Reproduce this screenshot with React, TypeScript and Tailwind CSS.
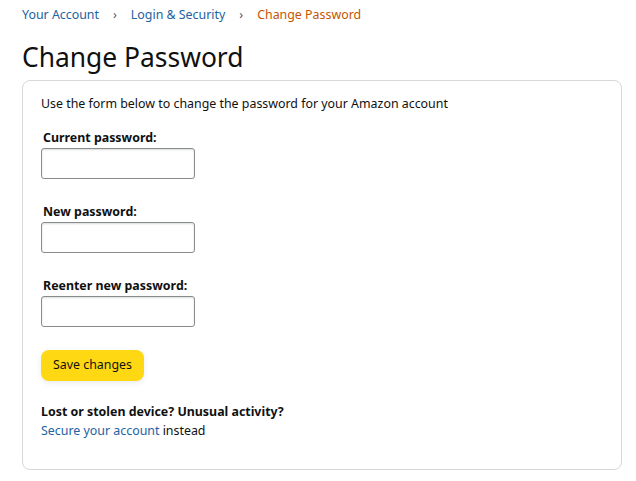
import React from 'react';

const Field: React.FC<{ label: string; id: string }> = ({ label, id }) => (
  <div className="flex flex-col">
    <label htmlFor={id} className="ml-[2px] text-[12.4px] font-bold leading-[17px] text-[#0f1111]">
      {label}
    </label>
    <input
      id={id}
      type="password"
      className="mt-[2px] h-[31px] w-[154px] rounded-[3px] border border-[#888c8c] bg-white px-2 shadow-[0_1px_2px_rgba(15,17,17,0.15)_inset] outline-none"
    />
  </div>
);

export default function App() {
  return (
    <div className="min-h-[481px] bg-white px-[22px] pt-[5px] text-[#0f1111]" style={{ fontFamily: '"Noto Sans", "Open Sans", sans-serif' }}>
      {/* Breadcrumb */}
      <nav className="flex items-center text-[12.4px] leading-[19px]">
        <a href="#" className="text-[#2162a1]">Your Account</a>
        <span className="mx-[14px] text-[#555]">›</span>
        <a href="#" className="text-[#2162a1]">Login &amp; Security</a>
        <span className="mx-[14px] text-[#555]">›</span>
        <span className="text-[#c45500]">Change Password</span>
      </nav>

      <h1 className="mt-[16px] text-[26.4px] leading-[34px] font-normal">Change Password</h1>

      <div className="mt-[6px] h-[390px] w-[600px] rounded-[8px] border border-[#d5d9d9] px-[18px] pt-[13px]">
        <p className="text-[12.4px] leading-[19px]">Use the form below to change the password for your Amazon account</p>

        <div className="mt-[16px] flex flex-col gap-[24px]">
          <Field id="cur" label="Current password:" />
          <Field id="new" label="New password:" />
          <Field id="re" label="Reenter new password:" />
        </div>

        <button className="mt-[23px] h-[31px] rounded-[8px] bg-[#ffd814] px-[12px] text-[12.4px] text-[#0f1111] shadow-[0_2px_5px_rgba(213,217,217,0.5)]">
          Save changes
        </button>

        <p className="mt-[21px] text-[12.4px] font-bold leading-[19px]">Lost or stolen device? Unusual activity?</p>
        <p className="text-[12.4px] leading-[19px]">
          <a href="#" className="text-[#2162a1]">Secure your account</a> instead
        </p>
      </div>
    </div>
  );
}
